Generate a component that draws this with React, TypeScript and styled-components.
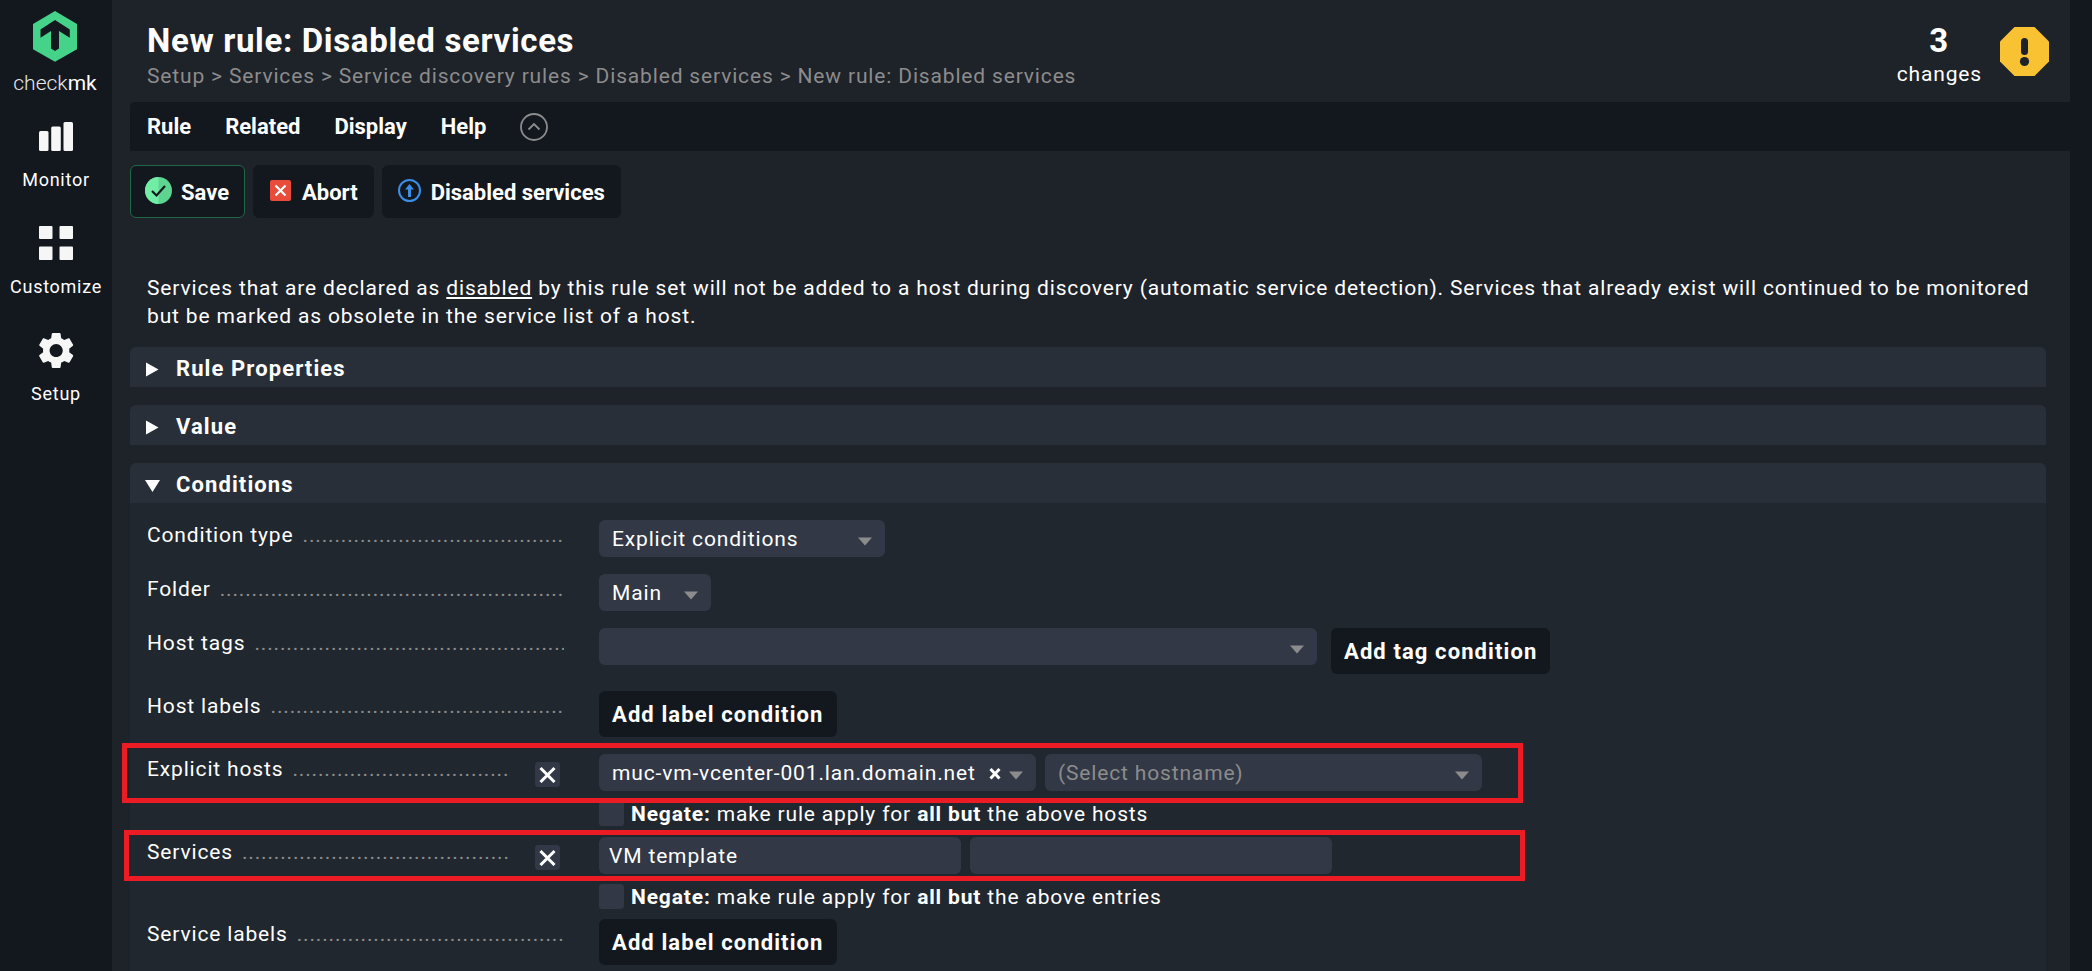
import React from "react";
import styled, { createGlobalStyle, css } from "styled-components";

const color = {
  nav: "#13181f",
  page: "#1e2229",
  head: "#282f38",
  panel: "#21272e",
  field: "#323845",
  text: "#ffffff",
  muted: "#8c8c8c",
  green: "#45d38a",
  red: "#ed1c24",
};

const tracking = {
  title: "0.02em",
  normal: "0.04em",
  wide: "0.05em",
};

const GlobalStyle = createGlobalStyle`
  *, *::before, *::after { box-sizing: border-box; }
  body {
    margin: 0;
    background: ${color.nav};
    color: ${color.text};
    font-family: Roboto, "Liberation Sans", sans-serif;
    font-size: 21px;
    line-height: 28px;
  }
  body, a, strong { letter-spacing: ${tracking.normal}; }
  button, input, select { font: inherit; letter-spacing: ${tracking.normal}; color: inherit; }
`;

const Page = styled.div`
  display: flex;
  min-height: 100vh;
`;

const Sidebar = styled.nav`
  flex: none;
  width: 112px;
  background: ${color.nav};
  display: flex;
  flex-direction: column;
  align-items: center;
  padding-top: 10px;
`;

const Brand = styled.a`
  display: flex;
  flex-direction: column;
  align-items: center;
  margin: 0 2px 21px 0;
  color: #e8e8e8;
  text-decoration: none;
  font-size: 21px;
  font-weight: 300;
  letter-spacing: normal;
  b { font-weight: 400; color: #fff; }
  svg { margin-bottom: 7px; }
`;

const NavItem = styled.a`
  display: flex;
  flex-direction: column;
  align-items: center;
  height: 107px;
  color: #fff;
  text-decoration: none;
  font-size: 18px;
  svg { margin-bottom: 10px; }
`;

const Main = styled.main`
  flex: 1;
  min-width: 0;
  display: flex;
  flex-direction: column;
  margin-right: 22px;
  background: ${color.page};
`;

const Header = styled.header`
  height: 102px;
  display: flex;
  justify-content: space-between;
  padding: 21px 21px 0 35px;
`;

const Title = styled.h1`
  margin: 0;
  font-size: 33px;
  line-height: 40px;
  font-weight: 700;
  letter-spacing: ${tracking.title};
`;

const Crumbs = styled.div`
  color: ${color.muted};
  line-height: 30px;
  a { color: inherit; text-decoration: none; }
`;

const Changes = styled.a`
  display: flex;
  gap: 18px;
  color: inherit;
  text-decoration: none;
  svg { margin-top: 6px; }
`;

const ChangeCount = styled.span`
  text-align: center;
  strong {
    display: block;
    font-size: 33px;
    line-height: 39px;
  }
`;

const MenuBar = styled.div`
  display: flex;
  align-items: center;
  gap: 34px;
  height: 49px;
  margin: 0 -22px 0 18px;
  padding-left: 17px;
  background: ${color.nav};
  border-radius: 5px 0 0 0;
`;

const MenuButton = styled.button`
  display: flex;
  padding: 0;
  border: 0;
  background: none;
  font-size: 22px;
  font-weight: 700;
  letter-spacing: normal;
  cursor: pointer;
`;

const Toolbar = styled.div`
  display: flex;
  gap: 8px;
  padding: 14px 18px 0;
`;

const Action = styled.button<{ $primary?: boolean }>`
  display: flex;
  align-items: center;
  gap: 9px;
  height: 53px;
  padding: 2px 15px 0 14px;
  border: 1px solid ${(p) => (p.$primary ? "#1f6846" : color.nav)};
  border-radius: 6px;
  background: ${color.nav};
  font-size: 22px;
  font-weight: 700;
  letter-spacing: normal;
  cursor: pointer;
  svg { margin-bottom: 5px; }
`;

const Intro = styled.p`
  margin: 0;
  padding: 56px 24px 17px 35px;
`;

const Sections = styled.form`
  flex: 1;
  display: flex;
  flex-direction: column;
  gap: 18px;
  padding: 0 24px 0 18px;
`;

const Section = styled.section<{ $grow?: boolean }>`
  flex: ${(p) => (p.$grow ? 1 : "none")};
  border-radius: 6px 6px 0 0;
  background: ${color.panel};
`;

const SectionHead = styled.button`
  display: flex;
  align-items: center;
  gap: 16px;
  width: 100%;
  height: 40px;
  padding: 3px 15px 0;
  border: 0;
  border-radius: 6px 6px 0 0;
  background: ${color.head};
  font-size: 22px;
  font-weight: 700;
  letter-spacing: ${tracking.wide};
  cursor: pointer;
`;

const Rows = styled.div`
  padding: 17px 17px 0;
`;

const Row = styled.div<{ $height: number }>`
  position: relative;
  display: flex;
  min-height: ${(p) => p.$height}px;
`;

const Legend = styled.div`
  flex: none;
  width: 452px;
  display: flex;
  align-items: flex-start;
  padding-right: 35px;
`;

const Caption = styled.label`
  flex: 1;
  min-width: 0;
  padding-top: 1px;
  overflow: hidden;
  white-space: nowrap;
  &::after {
    content: "${" ." + ".".repeat(80)}";
    color: ${color.muted};
    margin-left: 3px;
  }
`;

const ToggleOff = styled.button`
  display: flex;
  align-items: center;
  justify-content: center;
  width: 25px;
  height: 25px;
  margin: 8px 4px 0 27px;
  padding: 0;
  border: 0;
  border-radius: 3px;
  background: ${color.field};
`;

const Controls = styled.div`
  flex: 1;
  min-width: 0;
`;

const Line = styled.div<{ $gap?: number }>`
  display: flex;
  align-items: flex-start;
  gap: ${(p) => p.$gap ?? 9}px;
`;

const fieldBox = css`
  height: 37px;
  border: 0;
  border-radius: 6px;
  background: ${color.field};
  outline: none;
`;

const SelectWrap = styled.span<{ $width: number }>`
  position: relative;
  display: block;
  width: ${(p) => p.$width}px;
`;

const NativeSelect = styled.select<{ $muted?: boolean }>`
  ${fieldBox}
  appearance: none;
  display: block;
  width: 100%;
  padding: 0 30px 0 13px;
  color: ${(p) => (p.$muted ? color.muted : color.text)};
`;

const Caret = styled.svg`
  position: absolute;
  right: 13px;
  top: 17px;
  pointer-events: none;
`;

const Clear = styled.button`
  position: absolute;
  right: 35px;
  top: 13px;
  display: flex;
  padding: 0;
  border: 0;
  background: none;
`;

const TextField = styled.input`
  ${fieldBox}
  width: 362px;
  padding: 0 10px;
`;

const CondButton = styled.button`
  height: 46px;
  padding: 2px 13px 0;
  border: 0;
  border-radius: 6px;
  background: ${color.nav};
  font-size: 22px;
  font-weight: 700;
  letter-spacing: ${tracking.wide};
  cursor: pointer;
`;

const Negate = styled.label`
  display: flex;
  align-items: center;
  gap: 7px;
  height: 25px;
  margin-top: 10px;
`;

const Check = styled.input`
  appearance: none;
  width: 25px;
  height: 25px;
  margin: 0;
  border-radius: 3px;
  background: ${color.field};
`;

const Highlight = styled.span<{ $left: number; $top: number; $height: number }>`
  position: absolute;
  left: ${(p) => p.$left}px;
  top: ${(p) => p.$top}px;
  width: 1401px;
  height: ${(p) => p.$height}px;
  border: 5px solid ${color.red};
  pointer-events: none;
`;

const Select = ({ id, label, value, width, muted, clearable }: {
  id: string; label?: string; value: string; width: number; muted?: boolean; clearable?: boolean;
}) => (
  <SelectWrap $width={width}>
    <NativeSelect id={id} aria-label={label} $muted={muted}>
      <option>{value}</option>
    </NativeSelect>
    {clearable && (
      <Clear type="button" aria-label="Remove host">
        <svg width="12" height="14" viewBox="0 0 12 14" stroke="#fff" strokeWidth="3">
          <path d="M1.5 2l9 9.500M10.500 2l-9 9.500" />
        </svg>
      </Clear>
    )}
    <Caret width="14" height="9" viewBox="0 0 14 9"><path d="M0 .5h14L7 8.500z" fill="#8c8c8c" /></Caret>
  </SelectWrap>
);

const Cross = () => (
  <svg width="17" height="17" viewBox="0 0 17 17" stroke="#fff" strokeWidth="3">
    <path d="M1.500 2l14 14M15.500 2l-14 14" />
  </svg>
);

const Arrow = ({ open }: { open?: boolean }) => (
  <svg width="15" height="16" viewBox="0 0 15 16" fill="#fff">
    <path d={open ? "M0 3h15L7.500 15z" : "M1 1.500l12.500 7L1 15.500z"} />
  </svg>
);

export default function App() {
  return (
    <>
      <GlobalStyle />
      <Page>
        <Sidebar>
          <Brand href="#home">
            <svg width="44" height="52" viewBox="0 0 44 52">
              <path fill={color.green} fillRule="evenodd" d="M22 1l22 13v25.300L22 51.700 0 39.300V14zM22 10L7.500 19.500v8.200L18 21v17.500l4 2.500 4-2.500V21l10.800 6.700v-8.200z" />
            </svg>
            <span>check<b>mk</b></span>
          </Brand>
          <NavItem href="#monitor">
            <svg width="36" height="38" viewBox="0 0 36 38" fill="#f6f6f6">
              <rect x="1" y="13" width="9.500" height="20" rx="1.500" />
              <rect x="13.200" y="8.500" width="9.600" height="24.500" rx="1.500" />
              <rect x="25.500" y="4" width="9.500" height="29" rx="1.500" />
            </svg>
            Monitor
          </NavItem>
          <NavItem href="#customize">
            <svg width="36" height="38" viewBox="0 0 36 38" fill="#f6f6f6">
              <rect x="1" y="1" width="13.500" height="13" rx="1" />
              <rect x="21.500" y="1" width="13.500" height="13" rx="1" />
              <rect x="1" y="21.500" width="13.500" height="13.500" rx="1" />
              <rect x="21.500" y="21.500" width="13.500" height="13.500" rx="1" />
            </svg>
            Customize
          </NavItem>
          <NavItem href="#setup">
            <svg width="42" height="38" viewBox=".4 1.900 23 20.800" fill="#f6f6f6">
              <path d="M19.140 12.940c.04-.3.060-.61.060-.94 0-.32-.02-.64-.07-.94l2.030-1.580c.18-.14.230-.41.120-.61l-1.920-3.320c-.12-.22-.37-.29-.59-.22l-2.390.96c-.5-.38-1.030-.7-1.620-.94l-.36-2.540c-.04-.24-.24-.41-.48-.41h-3.840c-.24 0-.43.170-.47.410l-.36 2.540c-.59.240-1.130.570-1.620.94l-2.390-.96c-.22-.08-.47 0-.59.220L2.740 8.870c-.12.210-.08.470.12.610l2.030 1.580c-.05.3-.09.630-.09.94s.02.640.07.94l-2.030 1.580c-.18.140-.23.410-.12.610l1.920 3.320c.12.220.37.290.59.220l2.390-.96c.5.380 1.030.7 1.620.94l.36 2.540c.05.240.24.410.48.410h3.840c.24 0 .44-.17.470-.41l.36-2.540c.59-.24 1.130-.56 1.620-.94l2.390.96c.22.080.47 0 .59-.22l1.920-3.320c.12-.22.070-.47-.12-.61l-2.010-1.580zM12 15.600c-1.980 0-3.600-1.620-3.600-3.600s1.620-3.600 3.600-3.600 3.600 1.620 3.600 3.600-1.620 3.600-3.600 3.600z" />
            </svg>
            Setup
          </NavItem>
        </Sidebar>

        <Main>
          <Header>
            <div>
              <Title>New rule: Disabled services</Title>
              <Crumbs>
                <a href="#setup">Setup</a> &gt; <a href="#services">Services</a> &gt;{" "}
                <a href="#rules">Service discovery rules</a> &gt;{" "}
                <a href="#disabled">Disabled services</a> &gt; <a href="#new">New rule: Disabled services</a>
              </Crumbs>
            </div>
            <Changes href="#changes">
              <ChangeCount><strong>3</strong>changes</ChangeCount>
              <svg width="49" height="49" viewBox="0 0 49 49">
                <path d="M14.500 0h20L49 14.500v20L34.500 49h-20L0 34.500v-20z" fill="#f8c233" />
                <rect x="21" y="11" width="7" height="17" rx="3.500" fill="#1e2229" />
                <circle cx="24.500" cy="34.500" r="4.600" fill="#1e2229" />
              </svg>
            </Changes>
          </Header>

          <MenuBar>
            <MenuButton>Rule</MenuButton>
            <MenuButton>Related</MenuButton>
            <MenuButton>Display</MenuButton>
            <MenuButton>Help</MenuButton>
            <MenuButton aria-label="Collapse toolbar">
              <svg width="28" height="28" viewBox="0 0 28 28" fill="none" stroke="#8c8c8c" strokeWidth="1.800">
                <circle cx="14" cy="14" r="13" />
                <path d="M8.500 16.500l5.500-5.500 5.500 5.500" />
              </svg>
            </MenuButton>
          </MenuBar>

          <Toolbar>
            <Action $primary>
              <svg width="27" height="27" viewBox="0 0 27 27">
                <circle cx="13.500" cy="13.500" r="13.500" fill="#5dd490" />
                <path d="M13.500 0a13.500 13.500 0 0 0 0 27z" fill="#72eda6" />
                <path d="M7 14l4.500 4.500L20 9" fill="none" stroke="#13181f" strokeWidth="2.200" />
              </svg>
              Save
            </Action>
            <Action>
              <svg width="25" height="27" viewBox="0 0 25 27">
                <rect x="2" y="3" width="21" height="21" rx="2" fill="#ea4c3b" />
                <path d="M7.500 8.500l10 10M17.500 8.500l-10 10" stroke="#fff" strokeWidth="2.200" />
              </svg>
              Abort
            </Action>
            <Action>
              <svg width="25" height="27" viewBox="0 0 25 27">
                <circle cx="12.500" cy="13.500" r="10.500" fill="none" stroke="#3b8ee8" strokeWidth="2" />
                <path d="M12.500 7l4.500 5.500h-3V20h-3v-7.500H8z" fill="#3b8ee8" />
              </svg>
              Disabled services
            </Action>
          </Toolbar>

          <Intro>
            Services that are declared as <u>disabled</u> by this rule set will not be added to a host during
            discovery (automatic service detection). Services that already exist will continued to be monitored
            but be marked as obsolete in the service list of a host.
          </Intro>

          <Sections>
            <Section><SectionHead type="button"><Arrow />Rule Properties</SectionHead></Section>
            <Section><SectionHead type="button"><Arrow />Value</SectionHead></Section>
            <Section $grow>
              <SectionHead type="button"><Arrow open />Conditions</SectionHead>
              <Rows>
                <Row $height={54}>
                  <Legend><Caption htmlFor="type">Condition type</Caption></Legend>
                  <Controls><Select id="type" value="Explicit conditions" width={286} /></Controls>
                </Row>
                <Row $height={54}>
                  <Legend><Caption htmlFor="folder">Folder</Caption></Legend>
                  <Controls><Select id="folder" value="Main" width={112} /></Controls>
                </Row>
                <Row $height={63}>
                  <Legend><Caption htmlFor="tags">Host tags</Caption></Legend>
                  <Controls>
                    <Line $gap={14}>
                      <Select id="tags" value="" width={718} />
                      <CondButton type="button">Add tag condition</CondButton>
                    </Line>
                  </Controls>
                </Row>
                <Row $height={63}>
                  <Legend><Caption htmlFor="hostlabels">Host labels</Caption></Legend>
                  <Controls><CondButton type="button" id="hostlabels">Add label condition</CondButton></Controls>
                </Row>
                <Row $height={83}>
                  <Legend>
                    <Caption htmlFor="host">Explicit hosts</Caption>
                    <ToggleOff type="button" aria-label="Disable explicit hosts"><Cross /></ToggleOff>
                  </Legend>
                  <Controls>
                    <Line>
                      <Select id="host" value="muc-vm-vcenter-001.lan.domain.net" width={437} clearable />
                      <Select id="host2" label="Another host" value="(Select hostname)" width={437} muted />
                    </Line>
                    <Negate>
                      <Check type="checkbox" />
                      <span><b>Negate:</b> make rule apply for <b>all but</b> the above hosts</span>
                    </Negate>
                  </Controls>
                  <Highlight $left={-25} $top={-11} $height={60} />
                </Row>
                <Row $height={82}>
                  <Legend>
                    <Caption htmlFor="service">Services</Caption>
                    <ToggleOff type="button" aria-label="Disable services"><Cross /></ToggleOff>
                  </Legend>
                  <Controls>
                    <Line>
                      <TextField id="service" defaultValue="VM template" />
                      <TextField aria-label="Another service" />
                    </Line>
                    <Negate>
                      <Check type="checkbox" />
                      <span><b>Negate:</b> make rule apply for <b>all but</b> the above entries</span>
                    </Negate>
                  </Controls>
                  <Highlight $left={-23} $top={-7} $height={51} />
                </Row>
                <Row $height={52}>
                  <Legend><Caption htmlFor="servicelabels">Service labels</Caption></Legend>
                  <Controls><CondButton type="button" id="servicelabels">Add label condition</CondButton></Controls>
                </Row>
              </Rows>
            </Section>
          </Sections>
        </Main>
      </Page>
    </>
  );
}
